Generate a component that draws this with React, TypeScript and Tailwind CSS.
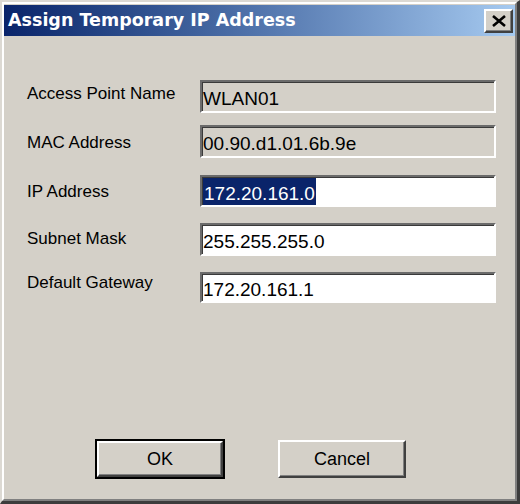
import React from "react";

type Row = { label: string; value: string; readOnly?: boolean; selected?: boolean; rowMt: string; labelMt: string; h: string };

const ROWS: Row[] = [
  { label: "Access Point Name", value: "WLAN01", readOnly: true, rowMt: "mt-[44px]", labelMt: "mt-[4px]", h: "h-[33px]" },
  { label: "MAC Address", value: "00.90.d1.01.6b.9e", readOnly: true, rowMt: "mt-[12px]", labelMt: "mt-[8px]", h: "h-[33px]" },
  { label: "IP Address", value: "172.20.161.0", selected: true, rowMt: "mt-[17px]", labelMt: "mt-[7px]", h: "h-[32px]" },
  { label: "Subnet Mask", value: "255.255.255.0", rowMt: "mt-[16px]", labelMt: "mt-[6px]", h: "h-[33px]" },
  { label: "Default Gateway", value: "172.20.161.1", rowMt: "mt-[16px]", labelMt: "mt-[1px]", h: "h-[31px]" },
];

function Field({ row }: { row: Row }) {
  return (
    <div
      className={`${row.h} w-[296px] flex items-stretch border-2 border-t-[#6b6b6b] border-l-[#6b6b6b] border-b-white border-r-white shadow-[inset_1px_1px_0_#3a3a3a] pl-[1px] pt-[1px] ${
        row.readOnly ? "bg-[#d4d0c8]" : "bg-white"
      }`}
    >
      {row.selected ? (
        <span className="flex items-center pt-[3px] px-[1px] bg-[#0a246a] text-white">{row.value}</span>
      ) : (
        <span className="flex items-center pt-[3px] text-black">{row.value}</span>
      )}
    </div>
  );
}

function Button({ label, isDefault }: { label: string; isDefault?: boolean }) {
  return (
    <div
      className={`w-[130px] h-[40px] ${
        isDefault ? "border-2 border-black" : "border border-transparent"
      }`}
    >
      <div className="w-full h-full border-2 border-t-white border-l-white border-r-[#404040] border-b-[#404040] shadow-[inset_-1px_-1px_0_#808080] flex items-center justify-center text-[18px] text-black bg-[#d4d0c8]">
        {label}
      </div>
    </div>
  );
}

export default function App() {
  return (
    <div className="w-[520px] h-[504px] bg-[#d4d0c8] border-t-2 border-l-2 border-t-[#dcd9d3] border-l-[#dcd9d3] border-r-[3px] border-b-[3px] border-r-[#3c3c3c] border-b-[#3c3c3c] font-['Liberation_Sans',Arial,sans-serif]">
      <div className="w-full h-full flex flex-col border-2 border-t-white border-l-white border-r-[#808080] border-b-[#808080]">
        {/* title bar */}
        <div className="mt-[1px] h-[31px] flex items-center justify-between bg-gradient-to-r from-[#0a246a] to-[#a6caf0] pl-[4px] pr-[2px]">
          <span className="font-['DejaVu_Sans',Verdana,sans-serif] font-bold text-[17.5px] text-white leading-none">
            Assign Temporary IP Address
          </span>
          <div className="w-[29px] h-[24px] bg-[#d4d0c8] border-2 border-t-white border-l-white border-r-[#404040] border-b-[#404040] shadow-[inset_-1px_-1px_0_#808080] flex items-center justify-center">
            <svg width="16" height="12" viewBox="0 0 16 12">
              <path d="M2 1 L14 11 M14 1 L2 11" stroke="#000" strokeWidth="2.6" />
            </svg>
          </div>
        </div>

        {/* form */}
        <div className="flex flex-col pl-[23px]">
          {ROWS.map((row) => (
            <div key={row.label} className={`flex items-start ${row.rowMt}`}>
              <div className={`w-[173px] text-[17px] leading-[20px] text-black ${row.labelMt}`}>{row.label}</div>
              <div className="text-[19px] leading-none">
                <Field row={row} />
              </div>
            </div>
          ))}
        </div>

        {/* buttons */}
        <div className="mt-auto mb-[20px] flex gap-[52px] pl-[91px]">
          <Button label="OK" isDefault />
          <Button label="Cancel" />
        </div>
      </div>
    </div>
  );
}
